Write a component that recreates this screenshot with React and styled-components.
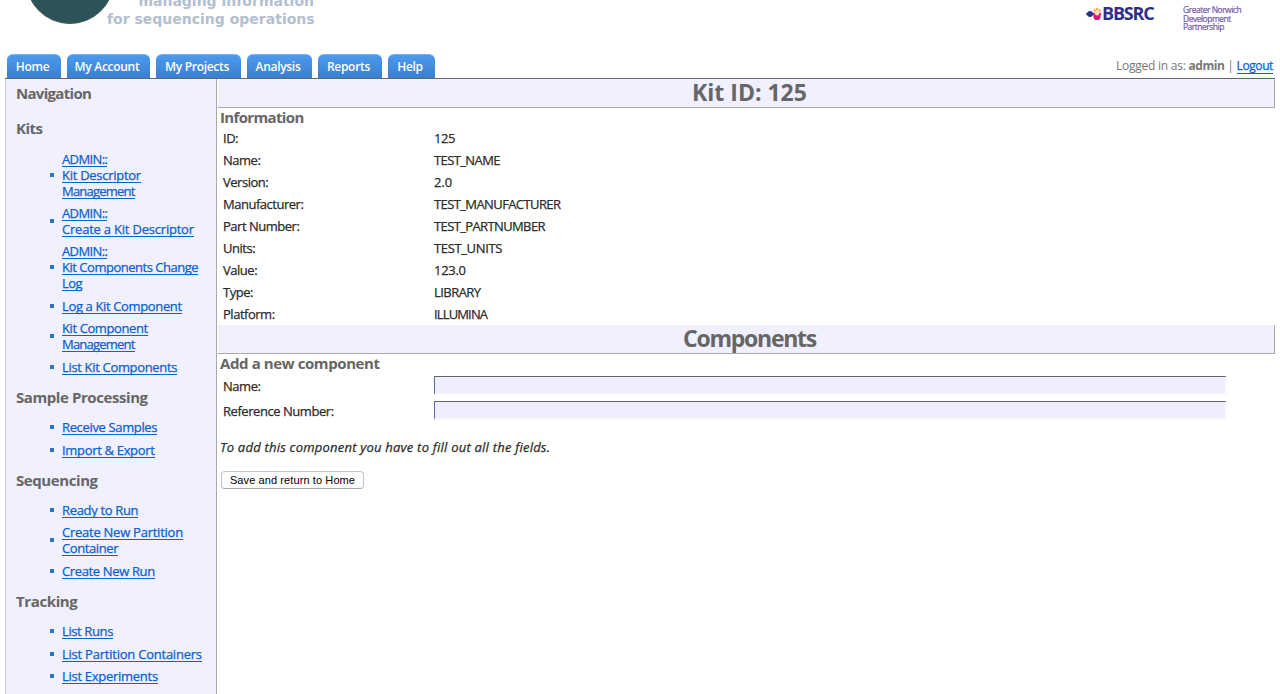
import React from 'react';
import styled, { createGlobalStyle } from 'styled-components';

const Global = createGlobalStyle`
  * { box-sizing: border-box; }
  body { margin: 0; background: #fff; overflow: hidden; color: #2b2b2b;
    font: 13px/16px "Open Sans", "Liberation Sans", sans-serif; }
`;
const Page = styled.div`height: 694px; overflow: hidden; padding: 0 5px; display: flex; flex-direction: column;`;
const Header = styled.header`height: 54px; flex: none; display: flex; justify-content: space-between;`;
const Brand = styled.div`display: flex; width: 309px; margin-left: 24px; height: 54px;`;
const Tagline = styled.div`
  width: 207px; margin-left: -6px; text-align: right; white-space: nowrap; color: #b3bfce;
  font: bold 14px/18px "DejaVu Sans", sans-serif;
  div { margin-top: -8px; } div + div { margin-top: 0; }
`;
const Partners = styled.div`display: flex; align-items: flex-start;`;
const Bbsrc = styled.div`
  display: flex; align-items: center; height: 14px; margin: 6px 29px 0 0; color: #2e3087;
  font: bold 18px/14px "Open Sans", sans-serif; letter-spacing: -1.2px; width: 68px; white-space: nowrap;
`;
const Mark = styled.svg`flex: none; margin-top: 1px;`;
const Norwich = styled.div`
  width: 92px; margin-top: 6px; color: #7458a8; font: 8.5px/8.6px "Open Sans", sans-serif; white-space: nowrap; letter-spacing: -0.5px;
  -webkit-text-stroke: 0.2px;
`;
const TabBar = styled.nav`height: 25px; flex: none; display: flex; gap: 6px; padding-left: 2px; border-bottom: 1px solid #666;`;
const Tab = styled.a`
  width: ${p => p.$w}px; height: 24px; border-radius: 6px 6px 0 0; color: #fff; text-align: center;
  background: linear-gradient(#4b9aef, #3b7fce); border-top: 1px solid #74b0f2; white-space: nowrap;
  font: 600 12px/23px "Open Sans", sans-serif; letter-spacing: ${p => p.$ls || 0}px; padding-right: 3px;
`;
const Session = styled.div`
  margin-left: auto; margin-right: 2px; color: #777; line-height: 24px; font-size: 12px; white-space: nowrap; letter-spacing: -0.24px;
  b { letter-spacing: -0.45px; }
`;
const Link = styled.a`
  display: inline-block; height: 16px; line-height: 16px; color: #0b61cb; border-bottom: 1px solid #0066cc; white-space: nowrap;
  letter-spacing: ${p => p.$ls || 0}px; -webkit-text-stroke: 0.25px;
`;
const Body = styled.div`display: flex; flex: 1;`;
const Sidebar = styled.aside`width: 212px; flex: none; background: #f0f0ff; border-left: 1px solid #ccc; border-right: 1px solid #aaa; padding: 4px 0 0 10px;`;
const Heading = styled.h2`
  margin: 0; color: #666; font: bold 15px/${p => p.$lh || 20}px "Open Sans", sans-serif; white-space: nowrap;
  letter-spacing: ${p => p.$ls || 0}px;
`;
const NavTitle = styled(Heading)`margin-bottom: 15px;`;
const List = styled.ul`
  list-style: none; margin: 12.2px 0 12.4px 34px; padding: 0; display: flex; flex-direction: column; gap: 6.4px;
  &:first-of-type { margin-top: 12.6px; }
`;
const Item = styled.li`display: flex; align-items: center; gap: 8px; &::before { content: ""; width: 4px; height: 4px; background: #2a74c4; }`;
const Lines = styled.div`display: flex; flex-direction: column; align-items: flex-start;`;
const Main = styled.main`flex: 1; padding-left: 1px;`;
const Title = styled.h1`
  margin: 0; height: 29px; background: #f0f0ff; border-right: 1px solid #aaa; border-bottom: 1px solid #aaa;
  color: #666; text-align: center; padding-left: 7px; font: bold 23px/26px "Open Sans", sans-serif; letter-spacing: ${p => p.$ls || 0}px;
`;
const Section = styled.section`padding-left: 2px; -webkit-text-stroke: 0.25px;
  h2, button { -webkit-text-stroke: 0; }
`;
const Row = styled.div`display: flex; align-items: center; height: ${p => p.$h || 22}px; padding-left: 3px;`;
const Label = styled.span`width: 211px; letter-spacing: ${p => p.$ls || 0}px;`;
const Value = styled.span`letter-spacing: ${p => p.$ls || 0}px;`;
const Input = styled.input`
  width: 793px; height: 19px; padding: 0; border: 1px solid; border-width: 1px 2px 2px 1px; border-radius: 0; outline: 0;
  border-color: #666 #f9f9ff #f9f9ff #6666aa; background: #eeeeff;
`;
const Note = styled.p`margin: 16px 0 16px; font-style: italic; letter-spacing: ${p => p.$ls || 0}px;`;
const Button = styled.button`
  display: block; margin-left: 1px; width: 143px; height: 18px; padding: 0; border: 1px solid #c4c4c4; border-bottom-color: #aaa;
  border-radius: 4px; background: #fff; color: #000; font: 11px/16px "Liberation Sans", sans-serif; white-space: nowrap; letter-spacing: 0.1px;
`;

const tabs = [['Home', 54], ['My Account', 83], ['My Projects', 85], ['Analysis', 65], ['Reports', 64], ['Help', 47]];
const groups = [
  ['Kits', -0.5, [['ADMIN::', 'Kit Descriptor', 'Management'], ['ADMIN::', 'Create a Kit Descriptor'], ['ADMIN::', 'Kit Components Change', 'Log'],
    ['Log a Kit Component'], ['Kit Component', 'Management'], ['List Kit Components']]],
  ['Sample Processing', -0.42, [['Receive Samples'], ['Import & Export']]],
  ['Sequencing', -0.42, [['Ready to Run'], ['Create New Partition', 'Container'], ['Create New Run']]],
  ['Tracking', -0.38, [['List Runs'], ['List Partition Containers'], ['List Experiments']]],
];
const tracking = {
  'ADMIN::': -0.6, 'Kit Descriptor': -0.28, 'Management': -0.78, 'Create a Kit Descriptor': -0.21, 'Kit Components Change': -0.48,
  'Log': -0.5, 'Log a Kit Component': -0.36, 'Kit Component': -0.4, 'List Kit Components': -0.33, 'Receive Samples': -0.35,
  'Import & Export': -0.32, 'Ready to Run': -0.33, 'Create New Partition': -0.25, 'Container': -0.4, 'Create New Run': -0.36,
  'List Runs': -0.38, 'List Partition Containers': -0.23, 'List Experiments': -0.28,
};
const info = [['ID:', '125', -0.4], ['Name:', 'TEST_NAME', -0.6], ['Version:', '2.0', -0.1], ['Manufacturer:', 'TEST_MANUFACTURER', -0.6],
  ['Part Number:', 'TEST_PARTNUMBER', -0.62], ['Units:', 'TEST_UNITS', -0.35], ['Value:', '123.0', -0.3], ['Type:', 'LIBRARY', -0.55],
  ['Platform:', 'ILLUMINA', -0.85]];

export default function App() {
  return (
    <Page>
      <Global />
      <Header>
        <Brand>
          <svg width="84" height="26"><circle cx="41" cy="-20.5" r="44" fill="#2c5358" stroke="#4b585b" /></svg>
          <Tagline><div>managing information</div><div>for sequencing operations</div></Tagline>
        </Brand>
        <Partners>
          <Bbsrc>
            <Mark width="16" height="14">
              <g fill="#2e3087"><circle cx="4" cy="7" r="2.9" /><circle cx="1.4" cy="7" r="1.2" /><circle cx="6.6" cy="7" r="1.3" /></g>
              <g fill="#e2127a"><circle cx="11" cy="9.4" r="3.6" /><circle cx="8.6" cy="7" r="1.6" /><circle cx="13.6" cy="7" r="1.6" /></g>
              <g fill="#f6a73c"><circle cx="8.8" cy="3.4" r="1.2" /><circle cx="11.1" cy="2.2" r="1.2" /><circle cx="13.4" cy="3.6" r="1.2" /></g>
              <circle cx="11.1" cy="6.2" r="2.2" fill="#fde9a6" />
            </Mark>
            BBSRC
          </Bbsrc>
          <Norwich>Greater Norwich<br />Development<br />Partnership</Norwich>
        </Partners>
      </Header>
      <TabBar>
        {tabs.map(([t, w]) => <Tab key={t} $w={w} $ls={-0.3}>{t}</Tab>)}
        <Session>Logged in as: <b>admin</b> | <Link $ls={-0.4}>Logout</Link></Session>
      </TabBar>
      <Body>
        <Sidebar>
          <NavTitle $ls={-0.7}>Navigation</NavTitle>
          {groups.map(([h, ls, items]) => (
            <React.Fragment key={h}>
              <Heading $ls={ls}>{h}</Heading>
              <List>{items.map((lines, i) => (
                <Item key={i}><Lines>{lines.map(l => <Link key={l} $ls={tracking[l]}>{l}</Link>)}</Lines></Item>
              ))}</List>
            </React.Fragment>
          ))}
        </Sidebar>
        <Main>
          <Title $ls={0}>Kit ID: 125</Title>
          <Section>
            <Heading $lh={19} $ls={-0.65}>Information</Heading>
            {info.map(([l, v, ls]) => <Row key={l}><Label $ls={-0.48}>{l}</Label><Value $ls={ls}>{v}</Value></Row>)}
          </Section>
          <Title $ls={-1.25}>Components</Title>
          <Section>
            <Heading $lh={19} $ls={-0.4}>Add a new component</Heading>
            {['Name:', 'Reference Number:'].map(l => <Row key={l} $h={25}><Label $ls={-0.45}>{l}</Label><Input /></Row>)}
            <Note $ls={0.22}>To add this component you have to fill out all the fields.</Note>
            <Button>Save and return to Home</Button>
          </Section>
        </Main>
      </Body>
    </Page>
  );
}
